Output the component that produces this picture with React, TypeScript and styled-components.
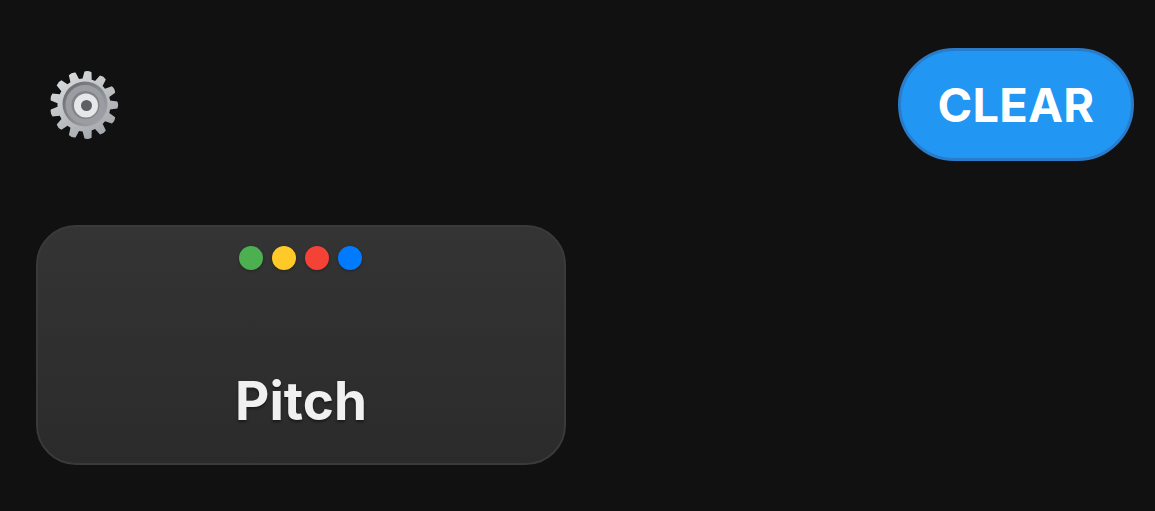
import React from 'react'
import styled, { createGlobalStyle } from 'styled-components'

const GlobalStyle = createGlobalStyle`
  html, body {
    margin: 0;
    padding: 0;
    background: #111111;
    font-family: Inter, "Liberation Sans", sans-serif;
  }
`

const Page = styled.div`
  width: 1155px;
  height: 511px;
  box-sizing: border-box;
  padding: 48px 21px 0 36px;
  background: #111111;
  overflow: hidden;
`

const Header = styled.div`
  display: flex;
  align-items: center;
  justify-content: space-between;
`

const SettingsButton = styled.button`
  appearance: none;
  display: block;
  width: 72px;
  height: 72px;
  margin: 0 0 0 12px;
  padding: 0;
  border: 0;
  background: transparent;
  cursor: pointer;

  svg {
    display: block;
    filter: blur(0.5px);
  }
`

const ClearButton = styled.button`
  appearance: none;
  box-sizing: border-box;
  width: 236px;
  height: 113px;
  padding: 0;
  border: 3px solid #2a7ccb;
  border-radius: 57px;
  background: #2196f3;
  color: #ffffff;
  font-family: inherit;
  font-size: 47px;
  font-weight: 700;
  letter-spacing: 0.2px;
  cursor: pointer;
`

const Card = styled.div`
  box-sizing: border-box;
  display: flex;
  flex-direction: column;
  align-items: center;
  width: 530px;
  height: 240px;
  margin-top: 64px;
  padding: 19px 0 32px;
  border: 2px solid #3a3a3a;
  border-radius: 40px;
  background: linear-gradient(180deg, #343434 0%, #2b2b2b 100%);
`

const Dots = styled.div`
  display: flex;
  gap: 9px;
  margin-right: 2px;
`

const Dot = styled.span<{ $color: string }>`
  width: 24px;
  height: 24px;
  border-radius: 50%;
  background: ${(p) => p.$color};
  box-shadow: 0 1px 3px rgba(0, 0, 0, 0.3);
`

const CardLabel = styled.div`
  margin-top: auto;
  color: #f0f0f0;
  font-size: 53px;
  line-height: 60px;
  font-weight: 700;
  text-shadow: 0 2px 3px rgba(0, 0, 0, 0.45);
`

const gearPath = (() => {
  const teeth = 13
  const outer = 33.5
  const inner = 26.5
  const step = (Math.PI * 2) / teeth
  const pt = (r: number, a: number) =>
    `${(36 + r * Math.cos(a)).toFixed(2)} ${(36 + r * Math.sin(a)).toFixed(2)}`
  let d = ''
  for (let i = 0; i < teeth; i++) {
    const a = i * step - Math.PI / 2 + 0.12
    d += `${i === 0 ? 'M' : 'L'}${pt(inner, a - step * 0.36)} `
    d += `L${pt(outer, a - step * 0.22)} `
    d += `Q${pt(outer + 1.5, a)} ${pt(outer, a + step * 0.22)} `
    d += `L${pt(inner, a + step * 0.36)} `
    d += `A${inner} ${inner} 0 0 1 ${pt(inner, a + step * 0.64)} `
  }
  return d + 'Z'
})()

const GearIcon = () => (
  <svg width="72" height="72" viewBox="0 0 72 72">
    <defs>
      <linearGradient id="gearBody" x1="0" y1="0" x2="0.6" y2="1">
        <stop offset="0" stopColor="#dfe1e3" />
        <stop offset="1" stopColor="#a6a9ad" />
      </linearGradient>
      <linearGradient id="gearRing" x1="0" y1="0" x2="1" y2="1">
        <stop offset="0" stopColor="#64676b" />
        <stop offset="1" stopColor="#a8abaf" />
      </linearGradient>
    </defs>
    <path d={gearPath} fill="url(#gearBody)" />
    <circle cx="37" cy="35" r="22.5" fill="url(#gearRing)" />
    <circle cx="37" cy="35.5" r="19.5" fill="#9a9da1" />
    <circle cx="37.5" cy="36" r="14" fill="#808387" />
    <circle cx="38" cy="36.5" r="12" fill="#e6e7e8" />
    <circle cx="38.5" cy="36.5" r="5.5" fill="#5c5f63" />
  </svg>
)

export default function App() {
  return (
    <Page>
      <GlobalStyle />
      <Header>
        <SettingsButton aria-label="Settings">
          <GearIcon />
        </SettingsButton>
        <ClearButton>CLEAR</ClearButton>
      </Header>
      <Card>
        <Dots>
          <Dot $color="#4caf50" />
          <Dot $color="#ffca28" />
          <Dot $color="#f44336" />
          <Dot $color="#007bff" />
        </Dots>
        <CardLabel>Pitch</CardLabel>
      </Card>
    </Page>
  )
}
